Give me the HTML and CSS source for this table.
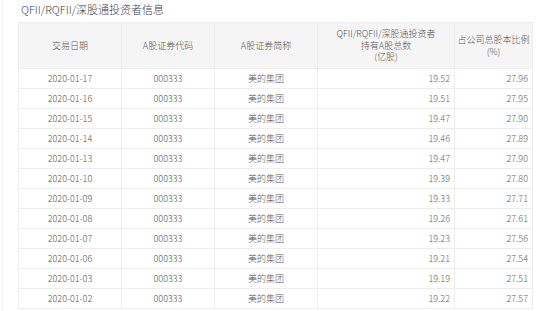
FILE: index.html
```html
<!DOCTYPE html>
<html lang="zh-CN">
<head>
    <meta charset="UTF-8">
    <title>QFII/RQFII/深股通投资者信息</title>
    <link rel="stylesheet" href="styles.css">
</head>
<body>
    <div class="panel">
        <h2 class="panel-title">QFII/RQFII/深股通投资者信息</h2>
        <table class="data-table">
            <colgroup>
                <col class="col-date">
                <col class="col-code">
                <col class="col-name">
                <col class="col-amount">
                <col class="col-ratio">
            </colgroup>
            <thead>
                <tr>
                    <th>交易日期</th>
                    <th>A股证券代码</th>
                    <th>A股证券简称</th>
                    <th>QFII/RQFII/深股通投资者<br>持有A股总数<br>(亿股)</th>
                    <th>占公司总股本比例<br>(%)</th>
                </tr>
            </thead>
            <tbody id="rows"></tbody>
        </table>
    </div>

    <script>
        const data = [
            ['2020-01-17', '19.52', '27.96'],
            ['2020-01-16', '19.51', '27.95'],
            ['2020-01-15', '19.47', '27.90'],
            ['2020-01-14', '19.46', '27.89'],
            ['2020-01-13', '19.47', '27.90'],
            ['2020-01-10', '19.39', '27.80'],
            ['2020-01-09', '19.33', '27.71'],
            ['2020-01-08', '19.26', '27.61'],
            ['2020-01-07', '19.23', '27.56'],
            ['2020-01-06', '19.21', '27.54'],
            ['2020-01-03', '19.19', '27.51'],
            ['2020-01-02', '19.22', '27.57']
        ];

        const tbody = document.getElementById('rows');
        data.forEach(([date, amount, ratio]) => {
            const tr = document.createElement('tr');
            tr.innerHTML = `
                <td class="center">${date}</td>
                <td class="center">000333</td>
                <td class="center">美的集团</td>
                <td class="num">${amount}</td>
                <td class="num">${ratio}</td>`;
            tbody.appendChild(tr);
        });
    </script>
</body>
</html>
```

FILE: styles.css
```css
* {
    margin: 0;
    padding: 0;
    box-sizing: border-box;
}

body {
    font-family: 'Noto Sans CJK SC', 'Noto Sans', sans-serif;
    background: #fff;
    color: #444;
    overflow: hidden;
}

.panel {
    margin-left: 2px;
    border-left: 1px solid #f1f3f7;
    padding: 0 0 0 15px;
    min-height: 311px;
}

.panel-title {
    font-size: 11px;
    font-weight: 300;
    color: #3a3f48;
    line-height: 18px;
    padding-left: 3px;
    height: 22px;
}

.data-table {
    width: 514px;
    border-collapse: collapse;
    table-layout: fixed;
    font-size: 9px;
}

.col-date { width: 103px; }
.col-code { width: 93px; }
.col-name { width: 103px; }
.col-amount { width: 137px; }
.col-ratio { width: 78px; }

.data-table th {
    background: #f5f5f5;
    font-weight: 300;
    color: #555;
    height: 46px;
    line-height: 11.5px;
    border: 1px solid #ededed;
    text-align: center;
    vertical-align: middle;
}

.data-table td {
    height: 20px;
    line-height: 12px;
    border: 1px solid #ededed;
    color: #555;
    font-weight: 300;
    padding: 0 4px;
}

.data-table td.center {
    text-align: center;
}

.data-table td.num {
    text-align: right;
    color: #666;
}
```
